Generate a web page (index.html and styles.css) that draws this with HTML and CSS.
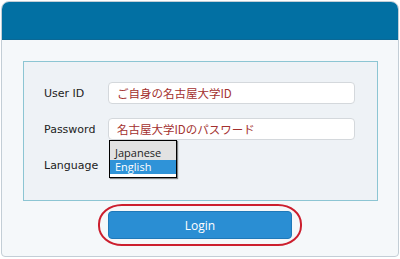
FILE: index.html
```html
<!DOCTYPE html>
<html lang="ja">
<head>
	<meta charset="UTF-8">
	<title>Login</title>
	<link rel="stylesheet" href="styles.css">
</head>
<body>
	<div class="card">
		<div class="card-head"></div>
		<div class="card-body">
			<div class="form-box">
				<div class="row">
					<label class="label">User ID</label>
					<div class="field">ご自身の名古屋大学ID</div>
				</div>
				<div class="row">
					<label class="label">Password</label>
					<div class="field">名古屋大学IDのパスワード</div>
				</div>
				<div class="row">
					<label class="label">Language</label>
					<div class="lang">
						<div class="lang-list">
							<div class="opt opt-first">Japanese</div>
							<div class="opt opt-on">English</div>
						</div>
					</div>
				</div>
			</div>
			<div class="btn-row">
				<button class="btn-login">Login</button>
				<span class="mark"></span>
			</div>
		</div>
	</div>
</body>
</html>
```

FILE: styles.css
```css
*{
	margin:0;
	padding:0;
	box-sizing:border-box;
}
body{
	background:#fff;
	padding:1px 1px 0 1px;
}
.card{
	width:398px;
	height:256px;
	border:1px solid #c3ced6;
	border-radius:8px 8px 4px 4px;
	background:#f5f8fa;
	overflow:hidden;
}
.card-head{
	height:38px;
	background:#0270a3;
	border-bottom:1px solid #0a6896;
}
.card-body{
	padding:21px 20px 0 21px;
}
.form-box{
	height:140px;
	border:1px solid #8cc5d3;
	background:#eef2f6;
	padding:20px 20px 0 20px;
}
.row{
	display:flex;
	align-items:center;
	height:22px;
	margin-bottom:14px;
}
.label{
	width:64px;
	font-family:"DejaVu Sans",Verdana,sans-serif;
	font-size:11px;
	color:#222;
}
.field{
	width:247px;
	height:22px;
	border:1px solid #d4d8dc;
	border-radius:4px;
	background:#fff;
	padding-left:8px;
	font-family:"Noto Sans CJK JP",sans-serif;
	font-size:11.5px;
	line-height:20px;
	color:#a3302e;
}
.lang{
	position:relative;
	width:80px;
	height:22px;
}
.lang-list{
	position:absolute;
	top:-14px;
	left:1px;
	width:68px;
	height:38px;
	border:1px solid #000;
	box-shadow:1px 1px 1px rgba(0,0,0,.45);
	background:#fff;
	font-family:"Open Sans",sans-serif;
	font-size:11px;
}
.opt{
	padding-left:5px;
	color:#222;
}
.opt-first{
	height:19px;
	line-height:19px;
	padding-top:2px;
	background:#e2e2e2;
}
.opt-on{
	height:14px;
	line-height:13px;
	background:#2f93d8;
	color:#fff;
}
.btn-row{
	position:relative;
	margin:10px 0 0 85px;
	width:184px;
}
.btn-login{
	display:block;
	width:184px;
	height:28px;
	border:1px solid #1f79b9;
	border-radius:4px;
	background:#2a8ed3;
	color:#fff;
	font-family:"Open Sans",sans-serif;
	font-size:12px;
}
.mark{
	position:absolute;
	left:-10px;
	top:-7px;
	width:204px;
	height:42px;
	border:2px solid #cc1f2e;
	border-radius:24px/20px;
}
```
